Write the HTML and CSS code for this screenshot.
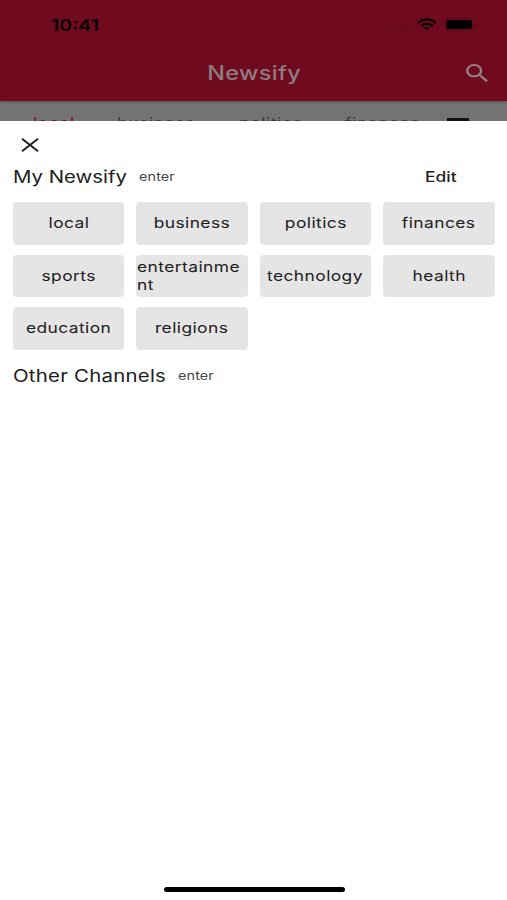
FILE: index.html
```html
<!DOCTYPE html>
<html lang="en">
<head>
<meta charset="UTF-8"><meta name="viewport" content="width=device-width,initial-scale=1.0">
<title>Newsify</title>
<link rel="stylesheet" href="styles.css">
</head>
<body>
<header class="appbar">
  <div class="status">
    <span class="time">10:41</span>
    <span class="cell"><i></i><i></i><i></i><i></i></span>
    <svg class="wifi" viewBox="0 0 20 13" width="20" height="13" fill="none" stroke="#0c0104" stroke-width="2.3">
      <path d="M1 5.1Q10-2.4 19 5.1"/><path d="M4.3 8Q10 3.4 15.7 8"/><path d="M7 9.8Q10 7.8 13 9.8L10 12.6z" fill="#0c0104" stroke="none"/>
    </svg>
    <svg class="battery" viewBox="0 0 34 13" width="34" height="13">
      <rect x=".5" y=".5" width="28" height="12" rx="3" fill="none" stroke="#5a081b"/>
      <rect x="1.5" y="2" width="25.5" height="9" rx="1.5"/><path d="M30 4.8Q32.5 6.5 30 8.2z" fill="#4a0618"/>
    </svg>
  </div>
  <div class="titlebar">
    <h1><span class="wide">Newsify</span></h1>
    <svg class="search" viewBox="3 3 17.5 17.5" width="22" height="18" preserveAspectRatio="none" fill="#968084">
      <path d="M15.5 14h-.79l-.28-.27A6.47 6.47 0 0 0 16 9.5 6.5 6.5 0 1 0 9.5 16c1.61 0 3.09-.59 4.23-1.57l.27.28v.79l5 4.99L20.49 19l-4.99-5zm-6 0C7.01 14 5 11.99 5 9.5S7.01 5 9.5 5 14 7.01 14 9.5 11.99 14 9.5 14z"/>
    </svg>
  </div>
</header>

<nav class="tabs">
  <span class="tab active">local</span>
  <span class="tab">business</span>
  <span class="tab">politics</span>
  <span class="tab">finances</span>
  <span class="menu"></span>
</nav>

<main class="sheet">
  <svg class="close" viewBox="0 0 18 14" width="18" height="14" fill="none" stroke="#1c1c1c" stroke-width="1.9">
    <path d="M1 .8 17 13.2M17 .8 1 13.2"/>
  </svg>
  <div class="row">
    <h2 class="my"><span class="wide">My Newsify</span></h2>
    <small><span class="wide">enter</span></small>
    <b class="edit"><span class="wide">Edit</span></b>
  </div>
  <div class="chips">
    <div class="chip"><span class="wide">local</span></div>
    <div class="chip"><span class="wide">business</span></div>
    <div class="chip"><span class="wide">politics</span></div>
    <div class="chip"><span class="wide">finances</span></div>
    <div class="chip"><span class="wide">sports</span></div>
    <div class="chip long"><span class="wide">entertainment</span></div>
    <div class="chip"><span class="wide">technology</span></div>
    <div class="chip"><span class="wide">health</span></div>
    <div class="chip"><span class="wide">education</span></div>
    <div class="chip"><span class="wide">religions</span></div>
  </div>
  <div class="row">
    <h2 class="other"><span class="wide">Other Channels</span></h2>
    <small><span class="wide">enter</span></small>
  </div>
  <div class="home"></div>
</main>
</body>
</html>
```
FILE: styles.css
```css
:root{--bar:#700a1f;--dim:#737373;--chip:#e5e5e5;--txt:#202020}
*{box-sizing:border-box}
body{margin:0;height:900px;position:relative;overflow:hidden;background:var(--dim);font-family:Inter,"Liberation Sans",sans-serif;color:var(--txt)}
h1,h2{margin:0;font-weight:400}

/* extended lettering */
.wide{display:inline-block;transform:scaleX(1.2);white-space:nowrap}

.appbar{height:101px;background:var(--bar);box-shadow:0 1px 3px rgba(0,0,0,.3);position:relative}
.status{height:48px;display:flex;align-items:center;padding:1px 28px 0 51px}
.time{font-size:16px;font-weight:600;color:#080104;transform:scaleX(1.22);transform-origin:left}
.cell{display:flex;gap:3px;margin:8px 9px 0 auto}
.cell i{width:3px;height:2px;border-radius:1px;background:#5c081b}
.wifi{margin-right:8px}
.titlebar{height:50px;display:flex;align-items:center;justify-content:center;position:relative}
.titlebar h1{font-size:19.5px;font-weight:500;letter-spacing:.3px;color:#8d7d80;padding-left:1px}
.search{position:absolute;right:19px;top:16px}

.tabs{display:flex;align-items:flex-start;padding:13px 0 0 33px}
.tab{flex:none;font-size:14.5px;line-height:18px;letter-spacing:.5px;color:#3a3a3a;transform:scaleX(1.2);transform-origin:left;width:84px}
.tab:nth-child(2){width:122px}
.tab:nth-child(3){width:106px}
.tab:nth-child(4){width:102px}
.active{color:#8a0a2c}
.menu{width:22px;height:3px;margin-top:4px;background:#111}

.sheet{position:absolute;top:121px;left:0;right:0;bottom:0;background:#fff;padding:17px 12.5px 0 13px}
.close{display:block;margin:0 0 0 8px}
.row{display:flex;align-items:center;height:28px;margin-top:10px}
.row .wide{transform-origin:left}
.row h2{font-size:17px;padding-top:1px}
.my{width:126px}
.other{width:165px;letter-spacing:.2px}
.row small{font-size:12px;letter-spacing:.1px;color:#444}
.edit{margin-left:auto;width:70px;font-size:14.5px;font-weight:500}
.chips{display:grid;grid-template-columns:repeat(4,1fr);grid-auto-rows:42.6px;gap:10px 12.2px;margin:12px 0 0}
.chips+.row{margin-top:12px}
.chip{display:flex;align-items:center;justify-content:center;background:var(--chip);border-radius:4px;font-size:14.5px;line-height:18px;letter-spacing:.35px}
.long{justify-content:flex-start;padding-left:.5px}
.long .wide{width:91px;transform-origin:left;white-space:normal;word-break:break-all}
.home{position:absolute;left:164px;bottom:8px;width:181px;height:5px;border-radius:3px;background:#000}
```
